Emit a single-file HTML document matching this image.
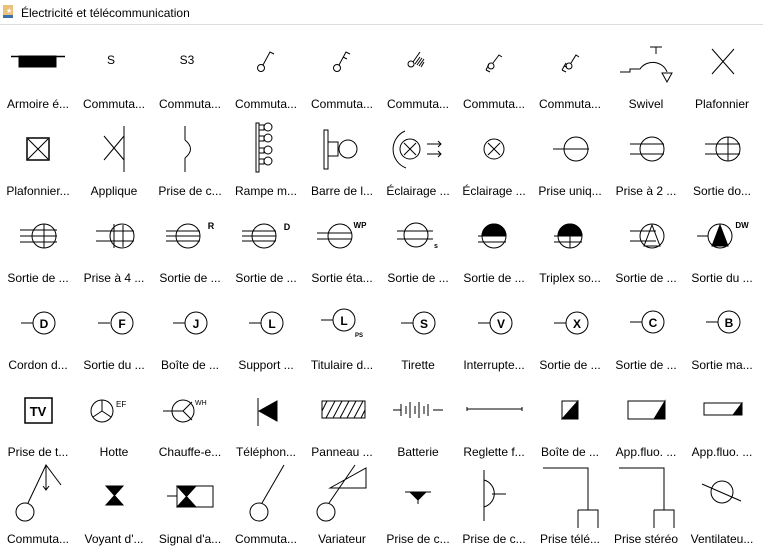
<!DOCTYPE html>
<html><head><meta charset="utf-8"><style>
html,body{margin:0;padding:0;background:#fff;width:763px;height:552px;overflow:hidden}
svg{display:block}
text{font-family:"Liberation Sans",sans-serif;}
.l{font-size:12px;fill:#000;text-anchor:middle}
</style></head><body>
<svg width="763" height="552" viewBox="0 0 763 552" xmlns="http://www.w3.org/2000/svg">
<rect x="0" y="0" width="763" height="24" fill="#fff"/>
<line x1="0" y1="24.5" x2="763" y2="24.5" stroke="#ddd"/>
<rect x="3" y="5" width="10" height="10" fill="#e8c27a"/>
<rect x="3" y="15" width="10" height="3" fill="#3b6fb0"/>
<text x="6" y="13" font-size="7" fill="#fff">★</text>
<text x="21" y="17" font-size="12">Électricité et télécommunication</text>

<g class="lbl">
<text class="l" x="38" y="108">Armoire é...</text><text class="l" x="114" y="108">Commuta...</text><text class="l" x="190" y="108">Commuta...</text><text class="l" x="266" y="108">Commuta...</text><text class="l" x="342" y="108">Commuta...</text><text class="l" x="418" y="108">Commuta...</text><text class="l" x="494" y="108">Commuta...</text><text class="l" x="570" y="108">Commuta...</text><text class="l" x="646" y="108">Swivel</text><text class="l" x="722" y="108">Plafonnier</text>
<text class="l" x="38" y="195">Plafonnier...</text><text class="l" x="114" y="195">Applique</text><text class="l" x="190" y="195">Prise de c...</text><text class="l" x="266" y="195">Rampe m...</text><text class="l" x="342" y="195">Barre de l...</text><text class="l" x="418" y="195">Éclairage ...</text><text class="l" x="494" y="195">Éclairage ...</text><text class="l" x="570" y="195">Prise uniq...</text><text class="l" x="646" y="195">Prise à 2 ...</text><text class="l" x="722" y="195">Sortie do...</text>
<text class="l" x="38" y="282">Sortie de ...</text><text class="l" x="114" y="282">Prise à 4 ...</text><text class="l" x="190" y="282">Sortie de ...</text><text class="l" x="266" y="282">Sortie de ...</text><text class="l" x="342" y="282">Sortie éta...</text><text class="l" x="418" y="282">Sortie de ...</text><text class="l" x="494" y="282">Sortie de ...</text><text class="l" x="570" y="282">Triplex so...</text><text class="l" x="646" y="282">Sortie de ...</text><text class="l" x="722" y="282">Sortie du ...</text>
<text class="l" x="38" y="369">Cordon d...</text><text class="l" x="114" y="369">Sortie du ...</text><text class="l" x="190" y="369">Boîte de ...</text><text class="l" x="266" y="369">Support ...</text><text class="l" x="342" y="369">Titulaire d...</text><text class="l" x="418" y="369">Tirette</text><text class="l" x="494" y="369">Interrupte...</text><text class="l" x="570" y="369">Sortie de ...</text><text class="l" x="646" y="369">Sortie de ...</text><text class="l" x="722" y="369">Sortie ma...</text>
<text class="l" x="38" y="456">Prise de t...</text><text class="l" x="114" y="456">Hotte</text><text class="l" x="190" y="456">Chauffe-e...</text><text class="l" x="266" y="456">Téléphon...</text><text class="l" x="342" y="456">Panneau ...</text><text class="l" x="418" y="456">Batterie</text><text class="l" x="494" y="456">Reglette f...</text><text class="l" x="570" y="456">Boîte de ...</text><text class="l" x="646" y="456">App.fluo. ...</text><text class="l" x="722" y="456">App.fluo. ...</text>
<text class="l" x="38" y="543">Commuta...</text><text class="l" x="114" y="543">Voyant d'...</text><text class="l" x="190" y="543">Signal d'a...</text><text class="l" x="266" y="543">Commuta...</text><text class="l" x="342" y="543">Variateur</text><text class="l" x="418" y="543">Prise de c...</text><text class="l" x="494" y="543">Prise de c...</text><text class="l" x="570" y="543">Prise télé...</text><text class="l" x="646" y="543">Prise stéréo</text><text class="l" x="722" y="543">Ventilateu...</text>
</g>

<g stroke="#000" fill="none" stroke-width="1">
<!-- Row 1 -->
<line x1="11" y1="56.5" x2="65" y2="56.5" stroke-width="1.5"/>
<rect x="19" y="56" width="37" height="11" fill="#000"/>
<text x="111" y="64" font-size="12" stroke="none" fill="#000" text-anchor="middle">S</text>
<text x="187" y="64" font-size="12" stroke="none" fill="#000" text-anchor="middle">S3</text>
<circle cx="261" cy="68" r="3.5"/><path d="M263 65 L270 52 L274 54"/>
<circle cx="337" cy="68" r="3.5"/><path d="M339 65 L346 52 L350 54 M343 57 L347 59"/>
<circle cx="411" cy="64" r="3"/><path d="M413 62 L420 52 M415 64 L420 57 M417 65 L422 58 M419 66 L424 59 M421 67 L424 62"/>
<path d="M486 70 L489 64 M486 70 L490 72"/><circle cx="491" cy="66" r="3"/><path d="M493 63 L499 55 L502 57"/>
<path d="M562 70 L566 63 M562 70 L566 72 M564 66 L567 67"/><circle cx="569" cy="66" r="3"/><path d="M571 63 L576 55 L579 57"/>
<path d="M620 72 L630 72 L630 69 L640 69 A15 14 0 0 1 667 72 M656 47 L656 54 M650 47 L662 47"/><path d="M662 73 L672 73 L667 82 Z"/>
<path d="M712 49 L734 74 M734 49 L712 74"/>
<!-- Row 2 -->
<rect x="27" y="138" width="22" height="22" stroke-width="1.5"/><path d="M28 139 L48 159 M48 139 L28 159"/>
<path d="M124 126 L124 172 M104 136 L124 160 M124 136 L104 160" />
<path d="M185 126 L185 140 M185 158 L185 172 M185 140 Q196 149 185 158"/>
<rect x="256" y="123" width="3" height="49"/>
<g><circle cx="268" cy="127" r="4"/><circle cx="268" cy="138" r="4"/><circle cx="268" cy="150" r="4"/><circle cx="268" cy="161" r="4"/><path d="M259 125 h5 v5 h-5 M259 136 h5 v5 h-5 M259 148 h5 v5 h-5 M259 159 h5 v5 h-5"/></g>
<rect x="324" y="130" width="4" height="39"/><rect x="328" y="142" width="10" height="14"/><circle cx="348" cy="149" r="9"/>
<circle cx="410" cy="149" r="10"/><path d="M404 143 L416 155 M416 143 L404 155 M405 131 A20 20 0 0 0 406 168"/><path d="M427 144 h14 M438 141 l3 3 -3 3 M427 154 h14 M438 151 l3 3 -3 3"/>
<circle cx="494" cy="149" r="10"/><path d="M488 143 L500 155 M500 143 L488 155"/>
<path d="M553 149 H589"/><circle cx="576" cy="149" r="12"/>
<path d="M630 144 H664 M630 154 H664"/><circle cx="652" cy="149" r="12"/>
<path d="M705 144 H740 M705 154 H740 M728 137 V161"/><circle cx="728" cy="149" r="12"/>
<!-- Row 3 -->
<path d="M20 230 H57 M20 236 H57 M20 242 H57 M44 224 V248"/><circle cx="44" cy="236" r="12"/>
<path d="M96 231 H134 M96 241 H134 M114 224 V248 M123 225 V247"/><circle cx="122" cy="236" r="12"/>
<path d="M166 231 H200 M166 236 H200 M166 241 H200"/><circle cx="188" cy="236" r="12"/>
<path d="M242 231 H276 M242 236 H276 M242 241 H276"/><circle cx="264" cy="236" r="12"/>
<path d="M317 233 H352 M317 239 H352"/><circle cx="340" cy="236" r="12"/>
<path d="M397 231 H433 M397 239 H433"/><circle cx="416" cy="235" r="12"/>
<path d="M478 236 H506 M478 242 H506"/><path d="M482 236 A12 12 0 0 1 506 236 Z" fill="#000"/><circle cx="494" cy="236" r="12"/>
<path d="M554 236 H582 M554 242 H582 M570 236 V248"/><path d="M558 236 A12 12 0 0 1 582 236 Z" fill="#000"/><circle cx="570" cy="236" r="12"/>
<path d="M630 231 H656 M630 241 H656"/><circle cx="652" cy="236" r="12"/><path d="M652 225 L644 246 H660 Z"/>
<path d="M697 236 H708"/><circle cx="720" cy="236" r="12"/><path d="M720 225 L712 246 H728 Z" fill="#000"/>
<!-- Row 4 -->
<path d="M21 323 H33"/><circle cx="44" cy="323" r="11"/>
<path d="M98 323 H110"/><circle cx="122" cy="323" r="11"/>
<path d="M173 323 H185"/><circle cx="196" cy="323" r="11"/>
<path d="M249 323 H261"/><circle cx="272" cy="323" r="11"/>
<path d="M321 320 H333"/><circle cx="344" cy="320" r="11"/>
<path d="M401 323 H413"/><circle cx="424" cy="323" r="11"/>
<path d="M478 323 H490"/><circle cx="501" cy="323" r="11"/>
<path d="M554 323 H566"/><circle cx="577" cy="323" r="11"/>
<path d="M630 322 H642"/><circle cx="653" cy="322" r="11"/>
<path d="M706 322 H718"/><circle cx="729" cy="322" r="11"/>
<!-- Row 5 -->
<rect x="25" y="398" width="27" height="25" stroke-width="1.5"/>
<circle cx="102" cy="411" r="11"/><path d="M102 411 V400 M102 411 L93 417 M102 411 L111 417"/>
<path d="M163 411 H183"/><circle cx="183" cy="411" r="11"/><path d="M183 411 L192 402 M183 411 L192 420"/>
<path d="M258 398 V426"/><path d="M259 411 L277 401 V421 Z" fill="#000"/>
<rect x="322" y="401" width="43" height="17"/><path d="M326 418 L335 401 M333 418 L342 401 M340 418 L349 401 M347 418 L356 401 M354 418 L363 401 M361 418 L365 410 M322 411 L327 401"/>
<path d="M393 410 H401 M401 404 V416 M406 406 V414 M410 402 V418 M415 406 V414 M419 402 V418 M424 406 V414 M428 404 V416 M433 410 H443"/>
<path d="M467 409 H522 M467 407 V411 M522 407 V411"/>
<rect x="562" y="401" width="16" height="18"/><path d="M562 419 H578 V401 Z" fill="#000"/>
<rect x="628" y="401" width="37" height="18"/><path d="M654 419 H665 V401 Z" fill="#000"/>
<rect x="704" y="403" width="38" height="12"/><path d="M733 415 H742 V403 Z" fill="#000"/>
<!-- Row 6 -->
<circle cx="25" cy="512" r="9"/><path d="M28 503 L46 465 L61 485 M46 465 V489 M43 486 L46 490 L49 486"/>
<path d="M106 486 H123 L106 505 H123 Z" fill="#000"/>
<rect x="177" y="486" width="36" height="21"/><path d="M177 486 H196 L177 507 H196 Z" fill="#000"/><path d="M167 496 H177"/>
<circle cx="259" cy="512" r="9"/><path d="M262 503 L284 465"/>
<circle cx="326" cy="512" r="9"/><path d="M329 503 L355 465 M330 488 L366 468 V488 Z"/>
<path d="M410 492 H426 L418 500 Z" fill="#000"/><path d="M405 492 H431 M418 496 V504"/>
<path d="M484 470 V521 M484 480 A14 14 0 0 1 484 507 M492 494 H506"/>
<path d="M543 468 H588 V510 M578 510 H598 V528 M578 510 V528"/>
<path d="M619 468 H664 V510 M654 510 H674 V528 M654 510 V528"/>
<path d="M702 484 L741 501"/><circle cx="722" cy="492" r="11"/>
</g>
<g font-weight="bold" fill="#000" stroke="none" text-anchor="middle">
<text x="38" y="416" font-size="13">TV</text>
<text x="44" y="328" font-size="12">D</text>
<text x="122" y="328" font-size="12">F</text>
<text x="196" y="328" font-size="12">J</text>
<text x="272" y="328" font-size="12">L</text>
<text x="344" y="325" font-size="12">L</text>
<text x="359" y="337" font-size="6">PS</text>
<text x="424" y="328" font-size="12">S</text>
<text x="501" y="328" font-size="12">V</text>
<text x="577" y="328" font-size="12">X</text>
<text x="653" y="327" font-size="12">C</text>
<text x="729" y="327" font-size="12">B</text>
<text x="211" y="229" font-size="9">R</text>
<text x="287" y="230" font-size="9">D</text>
<text x="360" y="228" font-size="8">WP</text>
<text x="436" y="248" font-size="7">s</text>
<text x="742" y="228" font-size="8">DW</text>
</g>
<g fill="#000" stroke="none">
<text x="116" y="407" font-size="8">EF</text>
<text x="195" y="405" font-size="7">WH</text>
</g>
</svg>
</body></html>
